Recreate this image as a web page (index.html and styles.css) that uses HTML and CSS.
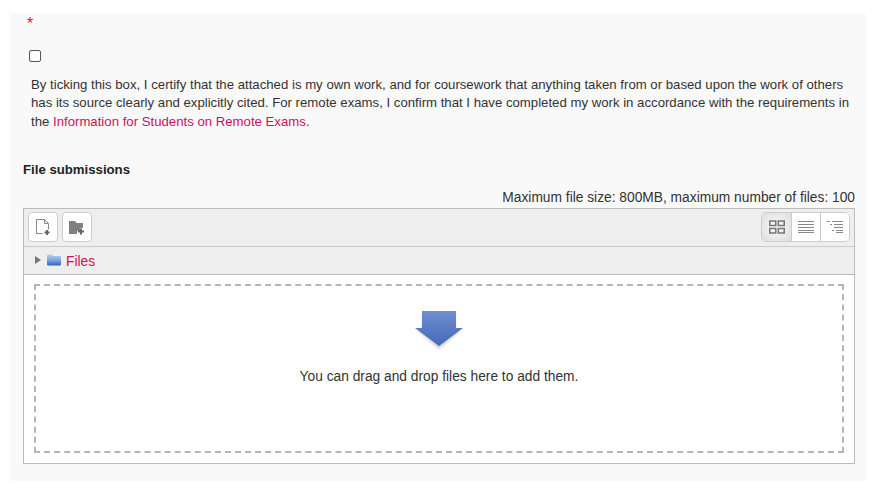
FILE: index.html
```html
<!DOCTYPE html>
<html lang="en">
<head>
<meta charset="utf-8">
<title>File submissions</title>
<link rel="stylesheet" href="styles.css">
</head>
<body>
<main class="panel">
  <div class="req">*</div>
  <div class="check-row"><input type="checkbox" class="check"></div>
  <p class="statement">By ticking this box, I certify that the attached is my own work, and for coursework that anything taken from or based upon the work of others has its source clearly and explicitly cited. For remote exams, I confirm that I have completed my work in accordance with the requirements in the <a href="#">Information for Students on Remote Exams</a>.</p>
  <h2 class="label">File submissions</h2>
  <div class="limits">Maximum file size: 800MB, maximum number of files: 100</div>
  <section class="picker">
    <div class="toolbar">
      <div class="tool-left">
        <button class="tbtn" aria-label="Add file">
          <svg width="16" height="18" viewBox="0 0 16 18"><path d="M1.500 1.500h8l4 4v6M1.500 1.500v14h6" fill="none" stroke="#888"/><path d="M9.500 1.500v4h4" fill="none" stroke="#888"/><path d="M12 12v5M9.500 14.500h5" stroke="#666" stroke-width="2"/></svg>
        </button>
        <button class="tbtn" aria-label="Add folder">
          <svg width="16" height="15" viewBox="0 0 16 15"><path d="M0 1h6l1.500 2H14v5h-3v3H8v3H0z" fill="#808080"/><path d="M12 8.500v6M9 11.500h6" stroke="#666" stroke-width="2"/></svg>
        </button>
      </div>
      <div class="views">
        <button class="vbtn on" aria-label="Icons">
          <svg width="16" height="14" viewBox="0 0 16 14" fill="none" stroke="#777" stroke-width="1.500"><rect x=".75" y="1" width="6" height="4.500"/><rect x="9.250" y="1" width="6" height="4.500"/><rect x=".75" y="8.500" width="6" height="4.500"/><rect x="9.250" y="8.500" width="6" height="4.500"/></svg>
        </button>
        <button class="vbtn" aria-label="List">
          <svg width="16" height="14" viewBox="0 0 16 14" stroke="#888"><path d="M0 1.500h16M0 4.500h16M0 7.500h16M0 10.500h16M0 12.500h16"/></svg>
        </button>
        <button class="vbtn" aria-label="Tree">
          <svg width="16" height="14" viewBox="0 0 16 14" stroke="#888"><path d="M0 1.500h3M5 1.500h11M3 4.500h2M7 4.500h9M7 7.500h9M5 10.500h2M9 10.500h7M9 12.500h7"/></svg>
        </button>
      </div>
    </div>
    <div class="path">
      <span class="tri"></span>
      <svg class="folder" width="14" height="12" viewBox="0 0 14 12"><defs><linearGradient id="f" x1="0" y1="0" x2="0" y2="1"><stop offset="0" stop-color="#b5d0f0"/><stop offset=".5" stop-color="#7fa8de"/><stop offset="1" stop-color="#2f62b8"/></linearGradient></defs><path d="M0 1.500 1 .5h4l1 1.500h7l1 1v8l-1 .5H1l-1-.5z" fill="url(#f)"/></svg>
      <a href="#" class="files">Files</a>
    </div>
    <div class="body">
      <div class="drop">
        <svg class="arrow" width="50" height="40" viewBox="0 0 50 40"><defs><linearGradient id="a" x1="0" y1="0" x2="0" y2="1"><stop offset="0" stop-color="#6f8fd0"/><stop offset="1" stop-color="#4568b8"/></linearGradient><filter id="s" x="-20%" y="-20%" width="140%" height="150%"><feGaussianBlur stdDeviation="1.500"/></filter></defs><path d="M3 20h6V4h32v16h6L25 39z" fill="#000" opacity=".2" filter="url(#s)"/><path d="M8 1h34v17h7L25 36 1 18h7z" fill="url(#a)"/></svg>
        <div class="drop-text">You can drag and drop files here to add them.</div>
      </div>
    </div>
  </section>
</main>
</body>
</html>
```

FILE: styles.css
```css
* { box-sizing: border-box; }
html, body { margin: 0; padding: 0; background: #fff; }
body {
  font-family: "Liberation Sans", Arial, sans-serif;
  font-size: 13.770px;
  color: #333;
  height: 493px;
  overflow: hidden;
}
a { color: #c8135f; text-decoration: none; }
.panel {
  margin: 13px 11px 0 10px;
  height: 468px;
  background: #f9f9f9;
  padding: 0 11px 0 13px;
}
.req { color: #e8202a; font-size: 16px; line-height: 18px; padding: 2px 0 0 4px; height: 20px; }
.check-row { height: 24px; margin-top: 17px; padding-left: 6px; }
.check {
  appearance: none;
  display: block;
  margin: 0;
  width: 12px;
  height: 12px;
  background: #fff;
  border: 1px solid #555;
  border-radius: 2px;
}
.statement { margin: 1.500px 0 0 8px; font-size: 13.200px; line-height: 18.600px; width: 826px; color: #333; }
.label { margin: 30.500px 0 0; font-size: 13.200px; line-height: 16px; font-weight: bold; color: #222; }
.limits { margin-top: 11px; text-align: right; line-height: 18px; }
.picker { margin-top: 1px; border: 1px solid #bbb; height: 256px; display: flex; flex-direction: column; }
.toolbar {
  height: 38px;
  background: #eee;
  border-bottom: 1px solid #ccc;
  display: flex;
  justify-content: space-between;
  align-items: center;
  padding: 0 4px;
}
.tool-left { display: flex; gap: 4px; }
.tbtn {
  width: 30px;
  height: 30px;
  padding: 0;
  background: #fff;
  border: 1px solid #ccc;
  border-radius: 4px;
  display: flex;
  align-items: center;
  justify-content: center;
}
.views { display: flex; border: 1px solid #ccc; border-radius: 5px; overflow: hidden; background: #fff; height: 30px; }
.vbtn {
  width: 29px;
  padding: 0;
  border: 0;
  border-left: 1px solid #ccc;
  background: #fff;
  display: flex;
  align-items: center;
  justify-content: center;
}
.vbtn:first-child { border-left: 0; }
.vbtn.on { background: radial-gradient(circle, #f2f2f2 30%, #dcdcdc 100%); }
.path {
  height: 28px;
  background: #eee;
  border-bottom: 1px solid #bbb;
  display: flex;
  align-items: center;
  padding-left: 11px;
}
.tri {
  width: 0; height: 0;
  border-left: 6px solid #777;
  border-top: 4px solid transparent;
  border-bottom: 4px solid transparent;
  margin-right: 6px;
}
.folder { margin-right: 5px; }
.files { font-size: 13.800px; padding-top: 3px; color: #d0104f; }
.body { flex: 1; background: #fff; padding: 9px 10px 10px; }
.drop {
  height: 100%;
  border: 2px dashed #b5b5b5;
  display: flex;
  flex-direction: column;
  align-items: center;
}
.arrow { margin-top: 24px; }
.drop-text { margin-top: 18px; line-height: 18px; color: #333; }
```
